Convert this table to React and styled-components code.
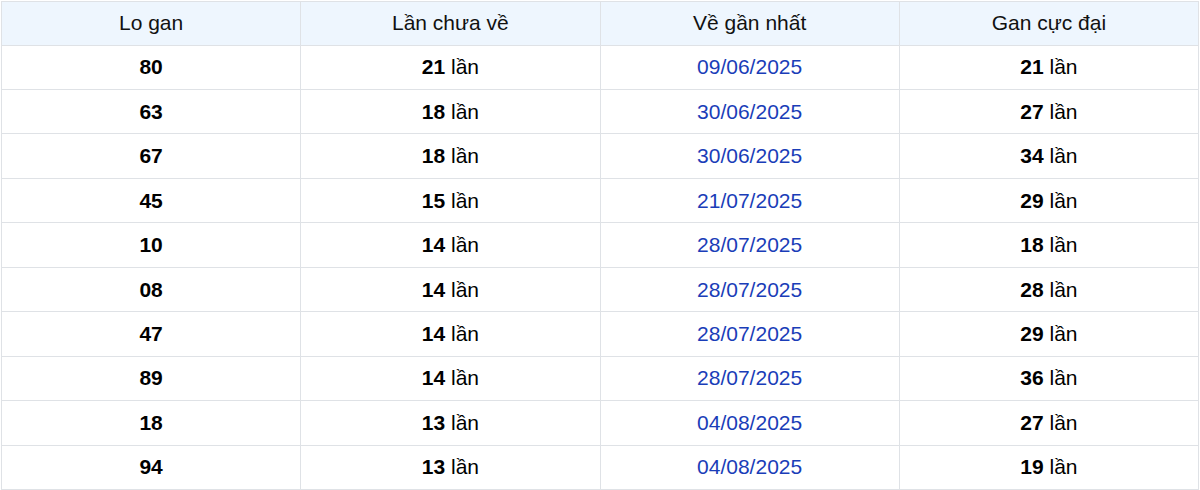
import React from "react";
import styled, { createGlobalStyle } from "styled-components";

const Global = createGlobalStyle`
  html, body { margin: 0; padding: 0; background: #fff; }
  body { font-family: "Liberation Sans", Arial, sans-serif; }
`;

const Wrap = styled.div`
  padding: 1px 1px 0 1px;
`;

const Table = styled.table`
  width: 100%;
  border-collapse: collapse;
  table-layout: fixed;
  font-size: 21px;
  color: #000;
`;

const HeadCell = styled.th`
  background: #eef6fe;
  font-weight: 400;
  border: 1px solid #dfe2e6;
  height: 42.6px;
  padding: 0;
  text-align: center;
  color: #111;
`;

const Row = styled.tr`
  height: 44.45px;
`;

const Cell = styled.td`
  border: 1px solid #dfe2e6;
  padding: 0;
  text-align: center;
  color: ${(p) => (p.$blue ? "#1a3db8" : "#000")};
`;

const Num = styled.b`
  font-weight: 700;
`;

const data = [
  ["80", 21, "09/06/2025", 21],
  ["63", 18, "30/06/2025", 27],
  ["67", 18, "30/06/2025", 34],
  ["45", 15, "21/07/2025", 29],
  ["10", 14, "28/07/2025", 18],
  ["08", 14, "28/07/2025", 28],
  ["47", 14, "28/07/2025", 29],
  ["89", 14, "28/07/2025", 36],
  ["18", 13, "04/08/2025", 27],
  ["94", 13, "04/08/2025", 19],
];

export default function App() {
  return (
    <>
      <Global />
      <Wrap>
        <Table>
          <thead>
            <tr>
              <HeadCell>Lo gan</HeadCell>
              <HeadCell>Lần chưa về</HeadCell>
              <HeadCell>Về gần nhất</HeadCell>
              <HeadCell>Gan cực đại</HeadCell>
            </tr>
          </thead>
          <tbody>
            {data.map(([lo, n, date, max]) => (
              <Row key={lo}>
                <Cell><Num>{lo}</Num></Cell>
                <Cell><Num>{n}</Num> lần</Cell>
                <Cell $blue>{date}</Cell>
                <Cell><Num>{max}</Num> lần</Cell>
              </Row>
            ))}
          </tbody>
        </Table>
      </Wrap>
    </>
  );
}
